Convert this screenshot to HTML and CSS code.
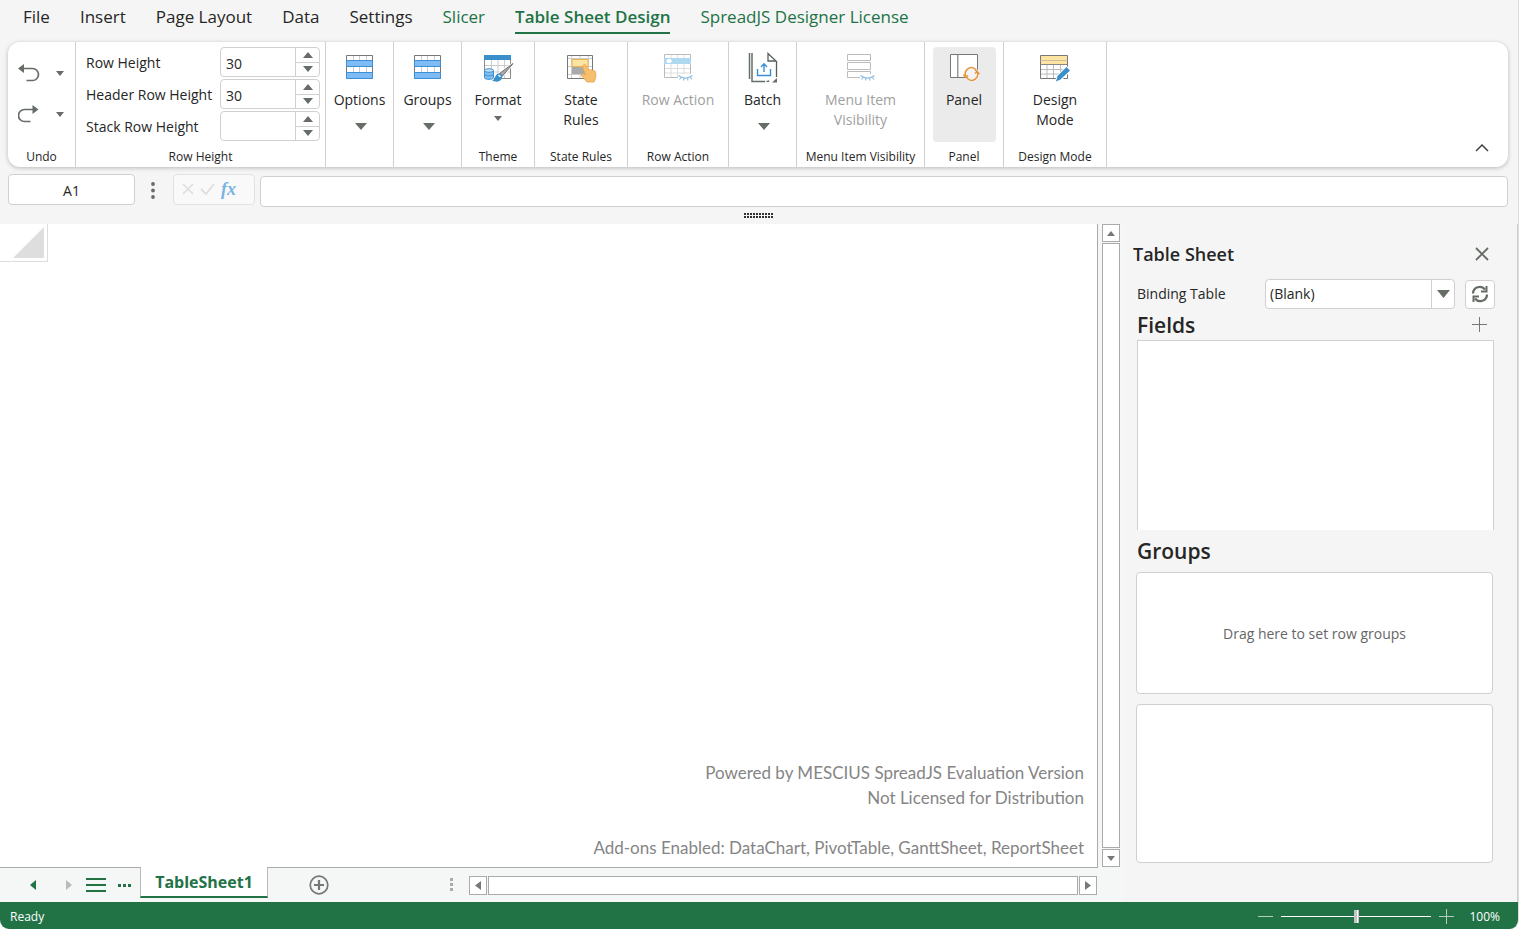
FILE: index.html
```html
<!DOCTYPE html>
<html lang="en">
<head>
<meta charset="utf-8">
<title>SpreadJS Designer</title>
<link rel="stylesheet" href="styles.css">
</head>
<body>
<div class="app">
  <nav class="tabs">
    <a class="tab" href="#">File</a>
    <a class="tab" href="#">Insert</a>
    <a class="tab" href="#">Page Layout</a>
    <a class="tab" href="#">Data</a>
    <a class="tab" href="#">Settings</a>
    <a class="tab tab-context" href="#">Slicer</a>
    <a class="tab tab-context tab-active" href="#">Table Sheet Design</a>
    <a class="tab tab-context" href="#">SpreadJS Designer License</a>
  </nav>

  <section class="ribbon">
    <div class="group w-68">
      <div class="undo-list">
        <div class="undo-row">
          <button class="plain" aria-label="Undo"><svg width="22" height="20" viewBox="0 0 22 20"><path d="M5 5.500h9.500a5.500 5.500 0 0 1 0 12H8.500" fill="none" stroke="#666d66" stroke-width="1.700"/><path d="M0 5.500 6 1v9z" fill="#666d66"/></svg></button>
          <button class="plain" aria-label="Undo history"><svg width="8" height="5"><path d="M0 0h8L4 5z" fill="#666d66"/></svg></button>
        </div>
        <div class="undo-row">
          <button class="plain" aria-label="Redo"><svg width="22" height="20" viewBox="0 0 22 20"><path d="M15 5.500H6.500a5.500 5.500 0 0 0 0 12H12.500" fill="none" stroke="#666d66" stroke-width="1.700"/><path d="M20.500 5.500 14.500 1v9z" fill="#666d66"/></svg></button>
          <button class="plain" aria-label="Redo history"><svg width="8" height="5"><path d="M0 0h8L4 5z" fill="#666d66"/></svg></button>
        </div>
      </div>
      <div class="caption">Undo</div>
    </div>

    <div class="group w-250">
      <div class="heights">
        <label for="rh">Row Height</label>
        <div class="spin"><input id="rh" type="text" value="30"><div class="spin-btns"><button aria-label="Increase"><svg width="10" height="6"><path d="M0 6h10L5 0z" fill="#666d66"/></svg></button><button aria-label="Decrease"><svg width="10" height="6"><path d="M0 0h10L5 6z" fill="#666d66"/></svg></button></div></div>
        <label for="hh">Header Row Height</label>
        <div class="spin"><input id="hh" type="text" value="30"><div class="spin-btns"><button aria-label="Increase"><svg width="10" height="6"><path d="M0 6h10L5 0z" fill="#666d66"/></svg></button><button aria-label="Decrease"><svg width="10" height="6"><path d="M0 0h10L5 6z" fill="#666d66"/></svg></button></div></div>
        <label for="sh">Stack Row Height</label>
        <div class="spin"><input id="sh" type="text" value=""><div class="spin-btns"><button aria-label="Increase"><svg width="10" height="6"><path d="M0 6h10L5 0z" fill="#666d66"/></svg></button><button aria-label="Decrease"><svg width="10" height="6"><path d="M0 0h10L5 6z" fill="#666d66"/></svg></button></div></div>
      </div>
      <div class="caption">Row Height</div>
    </div>

    <div class="group w-68">
      <button class="tool">
        <svg class="icon" viewBox="0 0 32 32"><path d="M2.500 3.500h26v23h-26z" fill="#fff" stroke="#777"/><path d="M9.500 4v22M15.500 4v22M22.500 4v22" stroke="#ccc"/><path d="M2.500 8.500h26v6h-26zM2.500 20.500h26v6h-26z" fill="#7fbcf5" stroke="#3b8fd6"/></svg>
        <span>Options</span>
        <svg class="caret-lg" width="12" height="7"><path d="M0 0h12L6 7z" fill="#666d66"/></svg>
      </button>
    </div>

    <div class="group w-68">
      <button class="tool">
        <svg class="icon" viewBox="0 0 32 32"><path d="M2.500 3.500h26v23h-26z" fill="#fff" stroke="#777"/><path d="M9.500 4v22M15.500 4v22M22.500 4v22" stroke="#ccc"/><path d="M2.500 8.500h26v6h-26zM2.500 20.500h26v6h-26z" fill="#7fbcf5" stroke="#3b8fd6"/></svg>
        <span>Groups</span>
        <svg class="caret-lg" width="12" height="7"><path d="M0 0h12L6 7z" fill="#666d66"/></svg>
      </button>
    </div>

    <div class="group w-73">
      <button class="tool">
        <svg class="icon" viewBox="0 0 32 32"><path d="M2.500 7.500h26v19h-26z" fill="#fff" stroke="#8a8a8a"/><path d="M9.500 8v18M16 8v18M22.500 8v18M3 13.500h25M3 20h25" stroke="#ccc"/><path d="M2 3h27v5H2z" fill="#3a8fcb"/><path d="M2 18.500v7c0 3 10 3 10 0v-7z" fill="#83beec" stroke="#fff"/><ellipse cx="7" cy="18.500" rx="4.500" ry="1.800" fill="#c5e1f7" stroke="#3b8fd6"/><path d="M2.500 18.500v7c0 2.500 9 2.500 9 0v-7M2.500 22c0 2.400 9 2.400 9 0" fill="none" stroke="#3b8fd6"/><path d="M31 11.500 20.500 24l-3-2.500z" fill="#999" stroke="#fff" stroke-width="2.500"/><path d="M31 11.500 20.500 24l-3-2.500z" fill="#aaa" stroke="#666" stroke-width=".9"/><path d="M16.500 21.500c3 0 4.500 2 3.500 4.500-1.500 4-6 4.500-10 2.500 3.500-1 2.500-6 6.500-7z" fill="#3a8fcb"/><path d="m16.500 23 2 1.800" stroke="#fff" stroke-width="1.500"/></svg>
        <span>Format</span>
        <svg class="caret-sm" width="8" height="5"><path d="M0 0h8L4 5z" fill="#666d66"/></svg>
      </button>
      <div class="caption">Theme</div>
    </div>

    <div class="group w-93">
      <button class="tool">
        <svg class="icon" viewBox="0 0 32 32"><path d="M2.500 3.500h25v23h-25z" fill="#fff" stroke="#777"/><path d="M6.500 4v22M15 4v22M23.500 4v22M3 6.500h24M3 14.500h24M3 22.500h24" stroke="#ccc"/><path d="M7 15h13v7H7z" fill="#aaa"/><path d="M7 7.500h16v7H7z" fill="#fde6a5" stroke="#eeb44f"/><path d="M18.500 13c1.500-.8 2.500 0 3 1.200l1.600 3.600c.7-.6 2-.5 2.500.2.800-.5 2-.2 2.400.6 1.200-.4 2.300.3 2.500 1.400.5 3 .5 5.500-.5 7.500l-1 2.500h-7c-2-2-3.500-4.500-5.500-6-.8-1.500.7-2.500 2-2l2 1-3-8c-.2-.8.200-1.600 1-2z" fill="#f5bf6e" stroke="#e8a04a" stroke-width=".8"/></svg>
        <span>State<br>Rules</span>
      </button>
      <div class="caption">State Rules</div>
    </div>

    <div class="group w-101">
      <button class="tool" disabled>
        <svg class="icon" viewBox="0 0 32 32"><path d="M2.500 2.500h26v23h-26z" fill="#fff" stroke="#bbb"/><path d="M9 3v22M15.500 3v22M22 3v22M3 16.500h25M3 21h25" stroke="#ddd"/><path d="M2 6h27v6H2z" fill="#afd9f0"/><path d="m4 9 1.500-2h3L10 9l-1.500 2h-3z" fill="#fff"/><path d="M16 22h16v8H16z" fill="#fff"/><path d="M16.500 23.500c4 3.500 10 3.500 14 0M19 25.500l-1.500 2M22 26.500l-.6 2M25.500 26.500l.6 2M28.500 25.500l1.500 2" fill="none" stroke="#93bfdf" stroke-width="1.200"/></svg>
        <span>Row Action</span>
      </button>
      <div class="caption">Row Action</div>
    </div>

    <div class="group w-68">
      <button class="tool">
        <svg class="icon" viewBox="0 0 32 32"><path d="M2.500 1v26M5 1v28.500h13" fill="none" stroke="#666d66" stroke-width="1.500"/><path d="M21 1.500v7.500h8zM29.500 9v16" fill="none" stroke="#555d57" stroke-width="1.300"/><path d="m18.500 30 3-2 1 2zM25 30.500l5-4.500v4.500z" fill="#666d66"/><path d="M10.500 17v6.500h13V17M17 20v-8M14 15l3-3.200L20 15" fill="none" stroke="#3b8fd6" stroke-width="1.400"/></svg>
        <span>Batch</span>
        <svg class="caret-lg" width="12" height="7"><path d="M0 0h12L6 7z" fill="#666d66"/></svg>
      </button>
    </div>

    <div class="group w-128">
      <button class="tool" disabled>
        <svg class="icon" viewBox="0 0 32 32"><path d="M3.500 2.500h23v6h-23zM3.500 10.500h23v7h-23zM3.500 19.500h23v6h-23z" fill="#fff" stroke="#bbb"/><path d="M16 22h16v8H16z" fill="#fff"/><path d="M16.500 23.500c4 3.500 10 3.500 14 0M19 25.500l-1.500 2M22 26.500l-.6 2M25.500 26.500l.6 2M28.500 25.500l1.500 2" fill="none" stroke="#93bfdf" stroke-width="1.200"/></svg>
        <span>Menu Item<br>Visibility</span>
      </button>
      <div class="caption">Menu Item Visibility</div>
    </div>

    <div class="group w-79">
      <button class="tool tool-on">
        <svg class="icon" viewBox="0 0 32 32"><path d="M2.500 2.500h27v23h-27z" fill="#fff" stroke="#777"/><path d="M9.500 3v22" stroke="#999"/><path d="M10.500 3v22" stroke="#ccc"/><circle cx="23.500" cy="22" r="7.500" fill="#f4f4f4"/><path d="M18 24.500a6 6 0 0 1 9-7.500M29 19.500a6 6 0 0 1-9 7.500" fill="none" stroke="#e8953a" stroke-width="1.500"/><path d="m27 17 2 3M15.500 22.500l2 3 2.500-2M31.500 22l-2.300-2.500-2.200 2M20 27l-1.500-2" fill="none" stroke="#e8953a" stroke-width="1.500"/></svg>
        <span>Panel</span>
      </button>
      <div class="caption">Panel</div>
    </div>

    <div class="group w-103">
      <button class="tool">
        <svg class="icon" viewBox="0 0 32 32"><path d="M1.500 3.500h27v23h-27z" fill="#fff" stroke="#777"/><path d="M8 13v13M14.500 13v13M21.500 13v13M2 17.500h26M2 22h26" stroke="#bbb"/><path d="M2 4h26v9H2z" fill="#fde4a0"/><path d="M1.500 8.500h27" stroke="#c9bfa0"/><path d="M1.500 12.500h27" stroke="#888"/><path d="m17 30 1.500-5.500 9-9.500 3.500 3.500-9.500 9.500z" fill="#3a8fcb" stroke="#fff" stroke-width="2"/><path d="m17 29.500 1.500-5.500 9-9 3.500 3.500-9.500 9z" fill="#3a8fcb"/></svg>
        <span>Design<br>Mode</span>
      </button>
      <div class="caption">Design Mode</div>
    </div>

    <button class="plain collapse" aria-label="Collapse ribbon"><svg width="14" height="8" viewBox="0 0 14 8"><path d="m1 7 6-6 6 6" fill="none" stroke="#444" stroke-width="1.500"/></svg></button>
  </section>

  <section class="formula">
    <input class="name-box" type="text" value="A1" aria-label="Name box">
    <svg class="dots" width="4" height="18"><circle cx="2" cy="3" r="1.900" fill="#666d66"/><circle cx="2" cy="9.500" r="1.900" fill="#666d66"/><circle cx="2" cy="16" r="1.900" fill="#666d66"/></svg>
    <div class="fx-box">
      <button class="plain" aria-label="Cancel"><svg width="12" height="12"><path d="m1 1 10 10M11 1 1 11" stroke="#ddd" stroke-width="1.500"/></svg></button>
      <button class="plain" aria-label="Enter"><svg width="15" height="12"><path d="m1 6 5 5 8-10" fill="none" stroke="#ddd" stroke-width="1.800"/></svg></button>
      <button class="plain fx" aria-label="Insert function">fx</button>
    </div>
    <input class="formula-input" type="text" aria-label="Formula">
  </section>
  <div class="splitter"><svg width="30" height="5"><path d="M0 1h30M0 4h30" stroke="#333" stroke-width="2" stroke-dasharray="2 1"/></svg></div>

  <div class="body">
    <main class="sheet">
      <div class="canvas">
        <div class="corner"><svg width="32" height="32"><path d="M32 0v31H1z" fill="#dedede"/></svg></div>
        <div class="watermark">
          <p>Powered by MESCIUS SpreadJS Evaluation Version</p>
          <p>Not Licensed for Distribution</p>
          <p class="addons">Add-ons Enabled: DataChart, PivotTable, GanttSheet, ReportSheet</p>
        </div>
      </div>
      <div class="vscroll">
        <button class="sb-btn" aria-label="Scroll up"><svg width="8" height="5"><path d="M0 5h8L4 0z" fill="#777"/></svg></button>
        <div class="sb-thumb"></div>
        <button class="sb-btn" aria-label="Scroll down"><svg width="8" height="5"><path d="M0 0h8L4 5z" fill="#777"/></svg></button>
      </div>
      <div class="tabstrip">
        <div class="sheet-nav">
          <button class="plain" aria-label="Previous sheet"><svg width="6" height="10"><path d="M6 0v10L0 5z" fill="#217346"/></svg></button>
          <button class="plain nav-next" aria-label="Next sheet"><svg width="6" height="10"><path d="M0 0v10l6-5z" fill="#bbb"/></svg></button>
          <button class="plain nav-all" aria-label="All sheets"><svg width="20" height="16"><path d="M0 2h20M0 8h20M0 14h20" stroke="#217346" stroke-width="2"/></svg></button>
          <button class="plain nav-more" aria-label="More sheets"><svg width="14" height="3"><path d="M0 1.500h3M5 1.500h3M10 1.500h3" stroke="#217346" stroke-width="3"/></svg></button>
        </div>
        <button class="sheet-tab">TableSheet1</button>
        <button class="plain add-sheet" aria-label="New sheet"><svg width="20" height="20"><circle cx="10" cy="10" r="8.800" fill="none" stroke="#777" stroke-width="1.700"/><path d="M5 10h10M10 5v10" stroke="#777" stroke-width="2.200"/></svg></button>
        <svg class="grip" width="3" height="14"><path d="M1.500 0v14" stroke="#aaa" stroke-width="3" stroke-dasharray="3 2"/></svg>
        <div class="hscroll">
          <button class="sb-btn" aria-label="Scroll left"><svg width="6" height="9"><path d="M6 0v9L0 4.500z" fill="#777"/></svg></button>
          <div class="sb-thumb"></div>
          <button class="sb-btn" aria-label="Scroll right"><svg width="6" height="9"><path d="M0 0v9l6-4.500z" fill="#777"/></svg></button>
        </div>
      </div>
    </main>

    <aside class="panel">
      <header class="panel-head">
        <h2>Table Sheet</h2>
        <button class="plain" aria-label="Close"><svg width="14" height="14"><path d="m1 1 12 12M13 1 1 13" stroke="#666d66" stroke-width="1.800"/></svg></button>
      </header>
      <div class="binding">
        <label for="bind">Binding Table</label>
        <div class="combo">
          <select id="bind"><option>(Blank)</option></select>
          <svg class="combo-arrow" width="13" height="8"><path d="M0 0h13L6.500 8z" fill="#666d66"/></svg>
        </div>
        <button class="refresh" aria-label="Refresh"><svg width="18" height="18" viewBox="0 0 18 18"><path d="M2 8.500A6.700 6.700 0 0 1 14 4.500M16 9.500A6.700 6.700 0 0 1 4 13.500" fill="none" stroke="#666d66" stroke-width="2.300"/><path d="M15.500 1v5.500H10M2.500 17v-5.500H8" fill="none" stroke="#666d66" stroke-width="2"/></svg></button>
      </div>
      <div class="fields-head">
        <h3>Fields</h3>
        <button class="plain" aria-label="Add field"><svg width="15" height="15"><path d="M7.500 0v15M0 7.500h15" stroke="#777"/></svg></button>
      </div>
      <div class="fields"></div>
      <h3 class="groups-title">Groups</h3>
      <div class="drop">Drag here to set row groups</div>
      <div class="drop drop-last"></div>
    </aside>
  </div>

  <footer class="status">
    <span class="ready">Ready</span>
    <button class="plain" aria-label="Zoom out"><svg width="15" height="15"><path d="M0 7.500h15" stroke="#b4cdbf"/></svg></button>
    <input class="zoom" type="range" min="0" max="100" value="50" aria-label="Zoom">
    <button class="plain" aria-label="Zoom in"><svg width="15" height="15"><path d="M0 7.500h15M7.500 0v15" stroke="#b4cdbf"/></svg></button>
    <span class="percent">100%</span>
  </footer>
</div>
</body>
</html>
```

FILE: styles.css
```css
* { box-sizing: border-box; }
body {
  margin: 0;
  background: #fff;
  color: #262626;
  font: 14px/20px "Open Sans", "Noto Sans", sans-serif;
}
button, input, select { font: inherit; color: inherit; }
svg { display: block; flex: none; }
.app {
  display: flex;
  flex-direction: column;
  min-height: 100vh;
  background: #f5f5f5;
  border-right: 1px solid #ddd;
  border-radius: 0 0 9px 9px;
  overflow: hidden;
}
.plain {
  display: flex;
  align-items: center;
  padding: 0;
  border: 0;
  background: none;
}

/* Menu tabs */
.tabs {
  display: flex;
  gap: 30px;
  height: 42px;
  padding-left: 23px;
  font-size: 17px;
  line-height: 34px;
}
.tab { height: 34px; color: #262626; text-decoration: none; white-space: nowrap; }
.tab-context { color: #217346; }
.tab-active { border-bottom: 2px solid #217346; font-weight: 600; }

/* Ribbon */
.ribbon {
  display: flex;
  margin: 0 10px 0 8px;
  height: 125px;
  background: #fff;
  border-radius: 12px;
  box-shadow: 0 1px 4px rgba(0, 0, 0, .25);
}
.group {
  display: flex;
  flex-direction: column;
  align-items: center;
  flex: none;
  padding-top: 5px;
  border-right: 1px solid #d0d0d0;
}
.w-68 { width: 68px; }
.w-73 { width: 73px; }
.w-79 { width: 79px; }
.w-93 { width: 93px; }
.w-101 { width: 101px; }
.w-103 { width: 103px; }
.w-128 { width: 128px; }
.w-250 { width: 250px; }
.caption {
  margin-top: auto;
  height: 22px;
  font-size: 12px;
  line-height: 24px;
  white-space: nowrap;
}
.undo-list { display: flex; flex-direction: column; gap: 21px; align-self: stretch; padding: 16px 11px 0 10px; }
.undo-row { display: flex; justify-content: space-between; }
.heights {
  display: grid;
  grid-template-columns: 1fr 100px;
  gap: 2px;
  align-items: center;
  align-self: stretch;
  padding: 0 5px 0 10px;
  white-space: nowrap;
}
.heights label { padding-top: 1px; }
.spin {
  display: flex;
  height: 30px;
  border: 1px solid #d0d0d0;
  border-radius: 4px;
}
.spin input { flex: 1; min-width: 0; padding: 3px 5px 0; border: 0; background: none; }
.spin-btns { display: flex; flex-direction: column; width: 24px; border-left: 1px solid #d0d0d0; }
.spin-btns button {
  display: flex;
  flex: 1;
  align-items: center;
  justify-content: center;
  padding: 0;
  border: 0;
  background: none;
}
.spin-btns button + button { border-top: 1px solid #d0d0d0; }
.tool {
  display: flex;
  flex-direction: column;
  align-items: center;
  min-width: 63px;
  height: 95px;
  padding: 5px 0 0;
  border: 0;
  border-radius: 4px;
  background: none;
  white-space: nowrap;
}
.tool:disabled { color: #a0a0a0; }
.tool-on { background: #ebebeb; }
.icon { width: 32px; height: 32px; margin-bottom: 6px; }
.caret-lg { margin: 13px 0 0 2px; }
.caret-sm { margin-top: 6px; }
.collapse { align-self: flex-end; margin: 0 19px 15px auto; }

/* Formula bar */
.formula { display: flex; align-items: flex-start; padding: 7px 10px 0 8px; }
.name-box, .fx-box, .formula-input {
  height: 31px;
  border: 1px solid #d0d0d0;
  border-radius: 4px;
  background: #fff;
}
.name-box { width: 127px; padding: 2px 2px 0; text-align: center; }
.dots { margin: 7px 18px 0 16px; }
.fx-box { display: flex; align-items: center; gap: 6px; width: 82px; margin-right: 5px; padding: 0 0 1px 8px; border-color: #e2e2e2; background: #f9f9f9; }
.fx { font: italic 700 18px/20px "Liberation Serif", serif; color: #7ab2e2; }
.formula-input { flex: 1; margin-top: 2px; }
.splitter { display: flex; justify-content: center; align-items: center; height: 17px; }

/* Sheet area */
.body { display: flex; flex: 1; }
.sheet {
  display: grid;
  grid-template: 1fr 35px / 1fr 18px;
  column-gap: 4px;
  flex: 1;
  padding-right: 4px;
  background: #f4f7f6;
}
.canvas {
  display: flex;
  flex-direction: column;
  justify-content: space-between;
  background: #fff;
  border-right: 1px solid #aaa;
}
.corner {
  display: flex;
  justify-content: flex-end;
  width: 48px;
  height: 38px;
  padding: 3px 3px 0 0;
  border: solid #ddd;
  border-width: 0 1px 1px 0;
}
.watermark {
  padding: 0 13px 7px 0;
  color: #858585;
  font: 17px/25px Lato, sans-serif;
  text-align: right;
}
.watermark p { margin: 0; }
.watermark .addons { margin-top: 25px; }
.vscroll { display: flex; flex-direction: column; gap: 1px; }
.hscroll { display: flex; flex: 1; height: 19px; padding-right: 1px; }
.sb-btn {
  display: flex;
  flex: none;
  align-items: center;
  justify-content: center;
  width: 18px;
  height: 18px;
  padding: 0;
  border: 1px solid #aaa;
  background: #fff;
}
.hscroll .sb-btn { height: 19px; }
.hscroll .sb-thumb { margin: 0 1px; }
.sb-thumb { flex: 1; border: 1px solid #aaa; background: #fff; }
.tabstrip { display: flex; align-items: center; border-top: 1px solid #aaa; }
.sheet-nav {
  display: flex;
  align-items: center;
  align-self: stretch;
  width: 140px;
  padding-left: 30px;
}
.nav-next { margin-left: 30px; }
.nav-all { margin-left: 14px; }
.nav-more { margin-left: 12px; }
.sheet-tab {
  align-self: flex-start;
  width: 128px;
  height: 31px;
  margin-top: -1px;
  padding: 0;
  border: solid #bbb;
  border-width: 0 1px;
  border-bottom: 2px solid #217346;
  background: #fff;
  color: #217346;
  font-size: 16px;
  font-weight: 700;
}
.add-sheet {
  align-self: stretch;
  width: 182px;
  padding-left: 41px;
}
.grip { margin-right: 16px; }

/* Side panel */
.panel { width: 394px; padding: 0 24px 0 12px; border-right: 1px solid #ccc; }
.panel h2, .panel h3 { margin: 0; font-weight: 600; }
.panel h2 { font-size: 18px; line-height: 24px; }
.panel h3 { font-size: 21px; line-height: 30px; }
.panel-head { display: flex; justify-content: space-between; align-items: center; height: 55px; margin-left: -3px; padding: 4px 4px 0 0; }
.binding { display: flex; align-items: center; height: 30px; }
.binding label { width: 129px; padding-left: 1px; }
.combo { position: relative; flex: 1; }
.combo select {
  width: 100%;
  height: 30px;
  padding: 0 28px 0 4px;
  border: 1px solid #d0d0d0;
  border-radius: 4px;
  background: linear-gradient(#d0d0d0, #d0d0d0) right 22px top / 1px 100% no-repeat #fff;
  appearance: none;
}
.combo-arrow { position: absolute; right: 5px; top: 11px; pointer-events: none; }
.refresh {
  display: flex;
  align-items: center;
  justify-content: center;
  width: 30px;
  height: 29px;
  margin: 0 -2px 0 10px;
  padding: 0;
  border: 1px solid #d0d0d0;
  border-radius: 4px;
  background: #fff;
}
.fields-head { display: flex; justify-content: space-between; align-items: center; height: 31px; padding: 0 6px 0 1px; }
.fields { height: 190px; margin: 0 -1px 0 1px; border: 1px solid #d0d0d0; border-bottom: 0; background: #fff; }
.groups-title { height: 42px; padding: 6px 0 0 1px; }
.drop {
  display: flex;
  align-items: center;
  justify-content: center;
  height: 122px;
  padding-top: 2px;
  border: 1px solid #d0d0d0;
  border-radius: 4px;
  background: #fff;
  color: #666;
}
.drop-last { height: 159px; margin-top: 10px; }

/* Status bar */
.status {
  display: flex;
  align-items: center;
  height: 27px;
  padding: 2px 18px 0 10px;
  background: #217346;
  color: #fff;
  font-size: 12px;
}
.ready { flex: 1; }
.zoom {
  width: 150px;
  height: 15px;
  margin: 0 8px;
  background: linear-gradient(#fff, #fff) center / 100% 1px no-repeat;
  appearance: none;
}
.zoom::-webkit-slider-thumb {
  width: 5px;
  height: 13px;
  background: linear-gradient(90deg, #c4c4c4 60%, #fff 60% 80%, #c4c4c4 80%);
  appearance: none;
}
.percent { margin-left: 15px; }
```
